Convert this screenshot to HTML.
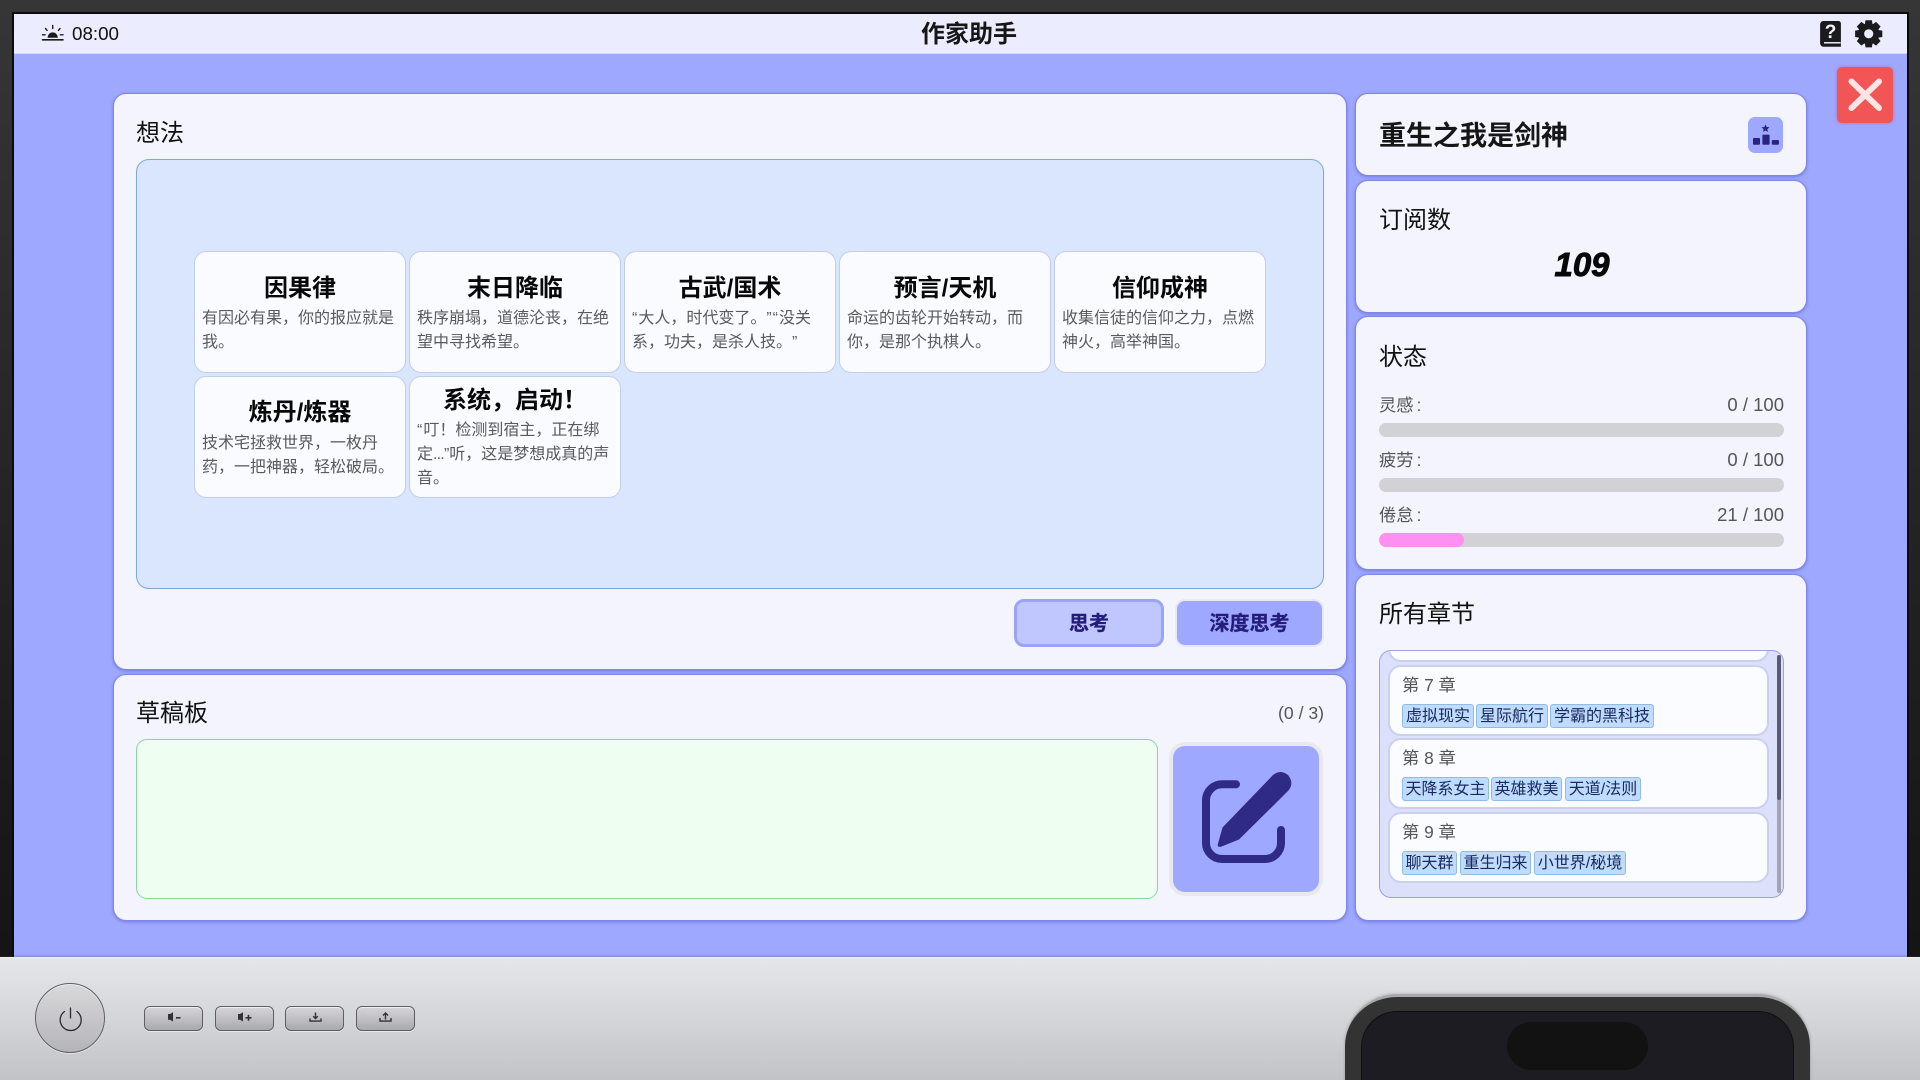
<!DOCTYPE html>
<html lang="zh">
<head>
<meta charset="utf-8">
<title>作家助手</title>
<style>
*{box-sizing:border-box;margin:0;padding:0}
html,body{width:1920px;height:1080px;overflow:hidden;background:#222}
body{position:relative;font-family:"Liberation Sans","Noto Sans CJK SC",sans-serif;color:#111;text-spacing-trim:space-all}
.a,.a *{position:absolute}
.a{position:absolute}
.t{white-space:nowrap;line-height:30px;height:30px}
#frame{left:0;top:0;width:1920px;height:1080px;background:linear-gradient(180deg,#363636 0,#2e2e2e 20%,#141414 90%)}
#screen{left:12px;top:12px;width:1897px;height:946px;background:#9fa8ff;border:2px solid #0b0b0b;border-bottom:0}
#head{left:14px;top:14px;width:1893px;height:40px;background:#ebecfd;border-bottom:1px solid #d4d7fb}
.panel{background:#f3f4fd;border:1px solid #7f87e2;border-radius:13px;box-shadow:0 1px 3px rgba(60,65,190,.45)}
.h{font-size:24px;font-weight:400;color:#111;line-height:30px;height:30px;white-space:nowrap}
#ideas{left:136px;top:159px;width:1188px;height:430px;background:#d9e6fd;border:1px solid #7fa8d8;border-radius:13px;box-shadow:0 0 0 1px #eaf5fb}
.card{width:212px;height:122px;background:#fafbff;border:1px solid #c3cdec;border-radius:12px}
.card b{left:0;width:210px;text-align:center;font-size:24px;line-height:32px;color:#080808;font-weight:700;white-space:nowrap}
.card p{left:7px;width:200px;font-size:16px;line-height:24px;color:#5a5a5e;white-space:nowrap}
.card p i{position:static;font-style:normal;letter-spacing:1px}
.card p u{position:static;text-decoration:none;letter-spacing:-.8px}
.lbl{font-size:17.3px;color:#555;line-height:24px;height:24px;white-space:nowrap}
.lbl i{position:static;font-style:normal;margin-left:3px}
.val{font-size:18.5px}
.bar{left:1379px;width:405px;height:14px;background:#d1d1d6;border-radius:7px;overflow:hidden}
.item{left:8px;width:381px;height:71px;background:#fbfcff;border:2px solid #ccd0ef;border-radius:13px}
.item span.n{left:12px;top:5px;font-size:17.3px;line-height:26px;color:#555;white-space:nowrap}
.tag{top:37px;height:24px;background:#bfdbfe;border:1px solid #8fbbe8;border-radius:3px;font-size:16px;line-height:24px;text-align:center;color:#1a2a60;white-space:nowrap}
#bottom{left:0;top:957px;width:1920px;height:123px;background:linear-gradient(180deg,#e5e6e8 0,#dddee1 25%,#c2c3c7 100%);border-top:1px solid #f0f0f2;box-shadow:0 -1px 2px rgba(60,60,60,.35)}
.hb{top:1006px;width:59px;height:25px;border:1.5px solid #5e5e62;border-radius:6px;background:linear-gradient(180deg,#d6d6d9,#a9a9ae);box-shadow:inset 0 1px 0 rgba(255,255,255,.65),0 1px 0 rgba(255,255,255,.5)}
</style>
</head>
<body>
<div class="a" id="frame"></div>
<div class="a" id="screen"></div>
<div class="a" id="head"></div>

<div class="a t" style="left:72px;top:19px;font-size:18.8px;color:#111">08:00</div>
<div class="a t" style="left:921px;top:20px;width:96px;text-align:center;font-size:24px;font-weight:700;color:#161616">作家助手</div>

<!-- Left panels -->
<div class="a panel" style="left:113px;top:93px;width:1234px;height:577px"></div>
<div class="a panel" style="left:113px;top:674px;width:1234px;height:247px"></div>
<div class="a h" style="left:136px;top:119px">想法</div>
<div class="a" id="ideas"></div>

<div class="a card" style="left:194px;top:251px"><b style="top:21px">因果律</b><p style="top:55px">有因必有果，你的报应就是<br>我。</p></div>
<div class="a card" style="left:409px;top:251px"><b style="top:21px">末日降临</b><p style="top:55px">秩序崩塌，道德沦丧，在绝<br>望中寻找希望。</p></div>
<div class="a card" style="left:624px;top:251px"><b style="top:21px">古武/国术</b><p style="top:55px"><i>“</i>大人，时代变了。<i>”“</i>没关<br>系，功夫，是杀人技。<i>”</i></p></div>
<div class="a card" style="left:839px;top:251px"><b style="top:21px">预言/天机</b><p style="top:55px">命运的齿轮开始转动，而<br>你，是那个执棋人。</p></div>
<div class="a card" style="left:1054px;top:251px"><b style="top:21px">信仰成神</b><p style="top:55px">收集信徒的信仰之力，点燃<br>神火，高举神国。</p></div>
<div class="a card" style="left:194px;top:376px"><b style="top:20px">炼丹/炼器</b><p style="top:55px">技术宅拯救世界，一枚丹<br>药，一把神器，轻松破局。</p></div>
<div class="a card" style="left:409px;top:376px"><b style="top:8px">系统，启动！</b><p style="top:42px"><i>“</i>叮！检测到宿主，正在绑<br>定<u>...</u>”听，这是梦想成真的声<br>音。</p></div>

<div class="a" style="left:1014px;top:599px;width:150px;height:48px;background:#c0c7ff;border:3.5px solid #9ba4f3;border-radius:10px;font-size:20px;font-weight:700;line-height:44px;text-align:center;color:#241c7a;-webkit-text-stroke:.3px #241c7a">思考</div>
<div class="a" style="left:1177px;top:601px;width:145px;height:44px;background:#9fa8ff;border-radius:8px;box-shadow:0 0 0 2px #e8e8f2;font-size:20px;font-weight:700;line-height:46px;text-align:center;color:#241c7a;-webkit-text-stroke:.3px #241c7a">深度思考</div>

<div class="a h" style="left:136px;top:699px">草稿板</div>
<div class="a lbl" style="right:596px;top:701px;color:#555;font-size:17.6px">(0 / 3)</div>
<div class="a" style="left:136px;top:739px;width:1022px;height:160px;background:#eefef0;border:1.5px solid #8bd59d;border-radius:11px"></div>
<div class="a" style="left:1173px;top:746px;width:146px;height:146px;background:#9fa8ff;border-radius:12px;box-shadow:0 0 0 4px #e8e8ee"></div>

<!-- Right panels -->
<div class="a panel" style="left:1355px;top:93px;width:452px;height:83px"></div>
<div class="a panel" style="left:1355px;top:180px;width:452px;height:133px"></div>
<div class="a panel" style="left:1355px;top:316px;width:452px;height:254px"></div>
<div class="a panel" style="left:1355px;top:574px;width:452px;height:347px"></div>

<div class="a t" style="left:1379px;top:121px;font-size:27px;font-weight:700;color:#161616">重生之我是剑神</div>
<div class="a" style="left:1748px;top:117px;width:35px;height:36px;background:#9fa8ff;border-radius:7px"></div>
<div class="a h" style="left:1379px;top:206px">订阅数</div>
<div class="a" style="left:1482px;top:246px;width:200px;text-align:center;font-size:33px;line-height:38px;font-weight:700;font-style:italic;color:#080808;-webkit-text-stroke:.9px #080808">109</div>

<div class="a h" style="left:1379px;top:343px">状态</div>
<div class="a lbl" style="left:1379px;top:393px">灵感<i>:</i></div>
<div class="a lbl val" style="right:136px;top:393px">0 / 100</div>
<div class="a bar" style="top:423px"></div>
<div class="a lbl" style="left:1379px;top:448px">疲劳<i>:</i></div>
<div class="a lbl val" style="right:136px;top:448px">0 / 100</div>
<div class="a bar" style="top:478px"></div>
<div class="a lbl" style="left:1379px;top:503px">倦怠<i>:</i></div>
<div class="a lbl val" style="right:136px;top:503px">21 / 100</div>
<div class="a bar" style="top:533px"><div style="left:0;top:0;height:14px;width:85px;background:#ff8ff0;border-radius:7px"></div></div>

<div class="a h" style="left:1379px;top:600px">所有章节</div>
<div class="a" style="left:1379px;top:650px;width:405px;height:248px;background:#dde0fb;border:1px solid #9da0da;border-radius:12px;overflow:hidden">
  <div class="item" style="top:-60px"></div>
  <div class="item" style="top:14px"><span class="n">第 7 章</span>
    <span class="tag" style="left:12px;width:72px">虚拟现实</span><span class="tag" style="left:86px;width:72px">星际航行</span><span class="tag" style="left:160px;width:104px">学霸的黑科技</span></div>
  <div class="item" style="top:87px"><span class="n">第 8 章</span>
    <span class="tag" style="left:12px;width:87px">天降系女主</span><span class="tag" style="left:101px;width:71px">英雄救美</span><span class="tag" style="left:175px;width:76px">天道/法则</span></div>
  <div class="item" style="top:161px"><span class="n">第 9 章</span>
    <span class="tag" style="left:12px;width:55px">聊天群</span><span class="tag" style="left:70px;width:71px">重生归来</span><span class="tag" style="left:144px;width:92px">小世界/秘境</span></div>
  <div style="left:397px;top:4px;width:4px;height:238px;background:#a3a3b5;border-radius:2px"></div>
  <div style="left:397px;top:4px;width:4px;height:145px;background:#5a5a72;border-radius:2px"></div>
</div>

<!-- Close -->
<div class="a" style="left:1837px;top:67px;width:56px;height:56px;background:#f25555;border-radius:5px;box-shadow:0 0 3px rgba(200,60,90,.5)"></div>

<!-- Bottom -->
<div class="a" id="bottom"></div>
<div class="a" style="left:35px;top:983px;width:70px;height:70px;border-radius:50%;border:1.2px solid #5f5f63;background:linear-gradient(180deg,#d9d9db,#b5b5b9);box-shadow:inset 0 1px 0 rgba(255,255,255,.5),0 1px 0 rgba(255,255,255,.5)"></div>
<div class="a hb" style="left:144px"></div>
<div class="a hb" style="left:215px"></div>
<div class="a hb" style="left:285px"></div>
<div class="a hb" style="left:356px"></div>

<!-- Phone -->
<div class="a" style="left:1345px;top:994px;width:465px;height:100px;background:#333;border-radius:52px 52px 0 0;border-top:3px solid #a9a9ab;box-shadow:0 0 3px rgba(80,80,80,.35)"></div>
<div class="a" style="left:1361px;top:1011px;width:433px;height:80px;background:#1c1c22;border-radius:36px 36px 0 0;border-top:1.5px solid #0d0d0f;border-left:1px solid #111;border-right:1px solid #111"></div>
<div class="a" style="left:1507px;top:1022px;width:141px;height:48px;background:#121212;border-radius:24px"></div>

<!-- Icons layer -->
<svg class="a" style="left:0;top:0" width="1920" height="1080" viewBox="0 0 1920 1080" xmlns="http://www.w3.org/2000/svg">
  <!-- sunrise -->
  <g fill="none" stroke="#1a1a1a" stroke-width="1.4" stroke-linecap="round">
    <path d="M42.5 39.8H63" stroke-width="1.6"/>
    <path d="M52.7 25.5V28.5M45.5 28.5l1.6 1.9M60 28.5l-1.6 1.9M42.5 34.8h2.6M60.4 34.8h2.6"/>
  </g>
  <path d="M47.5 37.8a5.2 5.4 0 0 1 10.4 0z" fill="#1a1a1a"/>
  <!-- book -->
  <path d="M1823.5 21H1838.5a2.4 2.4 0 0 1 2.4 2.4V46.7H1823.5a3.4 3.4 0 0 1-3.4-3.4V24.4A3.4 3.4 0 0 1 1823.5 21Z" fill="#1b1b1e"/>
  <path d="M1824 42.7H1840.6" stroke="#e9e9f6" stroke-width="1.5" fill="none"/>
  <text x="1830.5" y="38" font-family="Liberation Sans,sans-serif" font-size="19" font-weight="700" text-anchor="middle" fill="#f4f4fb">?</text>
  <!-- gear -->
  <g transform="translate(1868.7 33.8)" fill="#1b1b1e">
    <circle r="7.6" fill="none" stroke="#1b1b1e" stroke-width="6"/>
    <path d="M-3.2-13.6h6.4l.7 4.6h-7.8z"/>
    <path d="M-3.2-13.6h6.4l.7 4.6h-7.8z" transform="rotate(45)"/>
    <path d="M-3.2-13.6h6.4l.7 4.6h-7.8z" transform="rotate(90)"/>
    <path d="M-3.2-13.6h6.4l.7 4.6h-7.8z" transform="rotate(135)"/>
    <path d="M-3.2-13.6h6.4l.7 4.6h-7.8z" transform="rotate(180)"/>
    <path d="M-3.2-13.6h6.4l.7 4.6h-7.8z" transform="rotate(225)"/>
    <path d="M-3.2-13.6h6.4l.7 4.6h-7.8z" transform="rotate(270)"/>
    <path d="M-3.2-13.6h6.4l.7 4.6h-7.8z" transform="rotate(315)"/>
  </g>
  <!-- close x -->
  <path d="M1851.5 81.5L1879 108M1879 81.5L1851.5 108" fill="none" stroke="#fbe4e4" stroke-width="6" stroke-linecap="round"/>
  <!-- podium -->
  <g fill="#2a2480">
    <rect x="1753" y="138" width="7" height="6.8" rx="1"/>
    <rect x="1762.4" y="134.6" width="7.2" height="10.2" rx="1"/>
    <rect x="1771.8" y="140" width="7.2" height="4.8" rx="1"/>
    <path d="M1765.5 124.4l1.15 2.6 2.85.3-2.15 1.9.65 2.8-2.5-1.45-2.5 1.45.65-2.8-2.15-1.9 2.85-.3z"/>
  </g>
  <!-- pen to square -->
  <path d="M1236 784.3H1222a16 16 0 0 0-16 16V843a16 16 0 0 0 16 16H1265a16 16 0 0 0 16-16V830" fill="none" stroke="#2f2a85" stroke-width="8" stroke-linecap="round"/>
  <path d="M1218 843.5L1222.5 827.5L1273 775Q1280.5 769 1288 775Q1294.5 783 1288.5 790.5L1239 839.5L1221 846.8Q1216.8 847.5 1218 843.5Z" fill="#2f2a85"/>
  <!-- power -->
  <g fill="none" stroke="#2c2c30" stroke-width="1.3" stroke-linecap="round">
    <path d="M70.5 1008V1018"/>
    <path d="M64.5 1011.5a10.5 10.5 0 1 0 12.4 0"/>
  </g>
  <!-- hw icons -->
  <g fill="#333">
    <path d="M168 1014h2l3-1.8v9.3l-3-1.8h-2z"/><rect x="176" y="1017" width="4.5" height="1.6"/>
    <path d="M238 1014h2l3-1.8v9.3l-3-1.8h-2z"/><rect x="245.5" y="1017" width="6" height="1.6"/><rect x="247.7" y="1014.8" width="1.6" height="6"/>
  </g>
  <g fill="none" stroke="#333" stroke-width="1.4">
    <path d="M310 1018.5v2.6h11v-2.6"/>
    <path d="M315.5 1012.5v6m-2.3-2.3l2.3 2.3 2.3-2.3"/>
    <path d="M380 1018v3.1h11V1018"/>
    <path d="M385.5 1019.5v-6.5m-2.5 2.5l2.5-2.5 2.5 2.5"/>
  </g>
</svg>
</body>
</html>
